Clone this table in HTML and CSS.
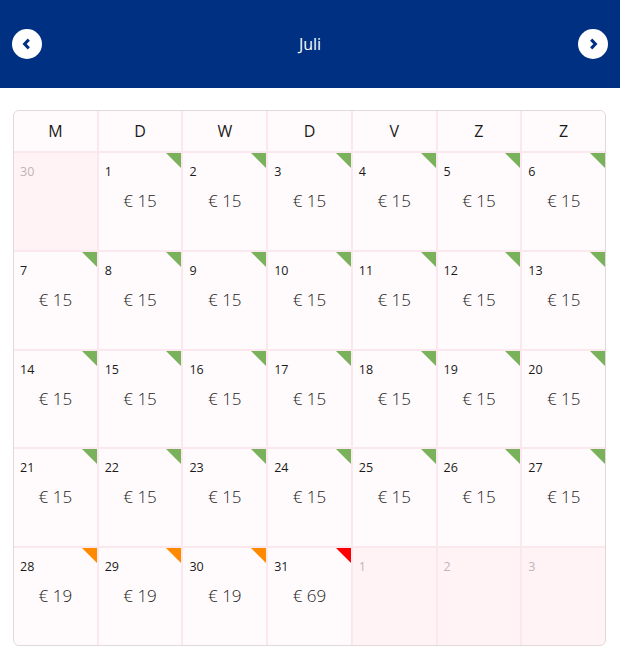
FILE: index.html
```html
<!DOCTYPE html>
<html lang="nl">
<head>
<meta charset="utf-8">
<title>Juli</title>
<link rel="stylesheet" href="styles.css">
</head>
<body>
<header class="bar">
  <button class="nav" aria-label="Vorige maand">
    <svg width="30" height="30" viewBox="0 0 30 30"><circle cx="15" cy="15" r="15" fill="#fff"/><path d="M16.8 10.6 L12.6 15 L16.8 19.4" fill="none" stroke="#003082" stroke-width="3"/></svg>
  </button>
  <div class="month">Juli</div>
  <button class="nav" aria-label="Volgende maand">
    <svg width="30" height="30" viewBox="0 0 30 30"><circle cx="15" cy="15" r="15" fill="#fff"/><path d="M13.2 10.6 L17.4 15 L13.2 19.4" fill="none" stroke="#003082" stroke-width="3"/></svg>
  </button>
</header>
<main class="wrap">
  <div class="cal">
    <div class="hd">M</div><div class="hd">D</div><div class="hd">W</div><div class="hd">D</div><div class="hd">V</div><div class="hd">Z</div><div class="hd">Z</div>

    <div class="day out"><span class="num">30</span></div>
    <div class="day"><span class="tag green"></span><span class="num">1</span><span class="price">€ 15</span></div>
    <div class="day"><span class="tag green"></span><span class="num">2</span><span class="price">€ 15</span></div>
    <div class="day"><span class="tag green"></span><span class="num">3</span><span class="price">€ 15</span></div>
    <div class="day"><span class="tag green"></span><span class="num">4</span><span class="price">€ 15</span></div>
    <div class="day"><span class="tag green"></span><span class="num">5</span><span class="price">€ 15</span></div>
    <div class="day"><span class="tag green"></span><span class="num">6</span><span class="price">€ 15</span></div>

    <div class="day"><span class="tag green"></span><span class="num">7</span><span class="price">€ 15</span></div>
    <div class="day"><span class="tag green"></span><span class="num">8</span><span class="price">€ 15</span></div>
    <div class="day"><span class="tag green"></span><span class="num">9</span><span class="price">€ 15</span></div>
    <div class="day"><span class="tag green"></span><span class="num">10</span><span class="price">€ 15</span></div>
    <div class="day"><span class="tag green"></span><span class="num">11</span><span class="price">€ 15</span></div>
    <div class="day"><span class="tag green"></span><span class="num">12</span><span class="price">€ 15</span></div>
    <div class="day"><span class="tag green"></span><span class="num">13</span><span class="price">€ 15</span></div>

    <div class="day"><span class="tag green"></span><span class="num">14</span><span class="price">€ 15</span></div>
    <div class="day"><span class="tag green"></span><span class="num">15</span><span class="price">€ 15</span></div>
    <div class="day"><span class="tag green"></span><span class="num">16</span><span class="price">€ 15</span></div>
    <div class="day"><span class="tag green"></span><span class="num">17</span><span class="price">€ 15</span></div>
    <div class="day"><span class="tag green"></span><span class="num">18</span><span class="price">€ 15</span></div>
    <div class="day"><span class="tag green"></span><span class="num">19</span><span class="price">€ 15</span></div>
    <div class="day"><span class="tag green"></span><span class="num">20</span><span class="price">€ 15</span></div>

    <div class="day"><span class="tag green"></span><span class="num">21</span><span class="price">€ 15</span></div>
    <div class="day"><span class="tag green"></span><span class="num">22</span><span class="price">€ 15</span></div>
    <div class="day"><span class="tag green"></span><span class="num">23</span><span class="price">€ 15</span></div>
    <div class="day"><span class="tag green"></span><span class="num">24</span><span class="price">€ 15</span></div>
    <div class="day"><span class="tag green"></span><span class="num">25</span><span class="price">€ 15</span></div>
    <div class="day"><span class="tag green"></span><span class="num">26</span><span class="price">€ 15</span></div>
    <div class="day"><span class="tag green"></span><span class="num">27</span><span class="price">€ 15</span></div>

    <div class="day"><span class="tag orange"></span><span class="num">28</span><span class="price">€ 19</span></div>
    <div class="day"><span class="tag orange"></span><span class="num">29</span><span class="price">€ 19</span></div>
    <div class="day"><span class="tag orange"></span><span class="num">30</span><span class="price">€ 19</span></div>
    <div class="day"><span class="tag red"></span><span class="num">31</span><span class="price">€ 69</span></div>
    <div class="day out"><span class="num">1</span></div>
    <div class="day out"><span class="num">2</span></div>
    <div class="day out"><span class="num">3</span></div>
  </div>
</main>
</body>
</html>
```

FILE: styles.css
```css
html, body {
  margin: 0;
  padding: 0;
  background: #fff;
  font-family: "Open Sans", "Noto Sans", sans-serif;
}

.bar {
  height: 88px;
  background: #003082;
  display: flex;
  align-items: center;
  justify-content: space-between;
  padding: 0 12px;
  box-sizing: border-box;
}

.nav {
  width: 30px;
  height: 30px;
  padding: 0;
  border: 0;
  background: none;
  display: block;
}
.nav svg { display: block; }

.month {
  color: #fff;
  font-size: 16px;
  line-height: 22px;
}

.wrap {
  padding: 22px 14px 0 13px;
}

.cal {
  display: grid;
  grid-template-columns: repeat(7, 1fr);
  grid-template-rows: 40px 97px 97px 96px 97px 97px;
  gap: 2px;
  background: #fbe8ee;
  border: 1px solid #e0d8da;
  border-radius: 6px;
  overflow: hidden;
}

.hd {
  background: #fffbfc;
  display: flex;
  align-items: center;
  justify-content: center;
  font-size: 16px;
  color: #1a1a1a;
}

.day {
  position: relative;
  background: #fffbfc;
  display: flex;
  flex-direction: column;
  padding: 10px 0 0 6px;
  box-sizing: border-box;
}
.day.out { background: #fff3f5; }

.num {
  font-size: 12.5px;
  line-height: 18px;
  color: #1a1a1a;
}
.out .num { color: #c2b4b8; }

.price {
  align-self: center;
  margin: 8px 6px 0 0;
  font-size: 17px;
  font-weight: 300;
  color: #1a1a1a;
  line-height: 24px;
}

.tag {
  position: absolute;
  top: 0;
  right: 0;
  width: 0;
  height: 0;
  border-top: 15px solid;
  border-left: 15px solid transparent;
}
.tag.green { border-top-color: #79b25a; }
.tag.orange { border-top-color: #ff8a00; }
.tag.red { border-top-color: #ff0000; }
```
